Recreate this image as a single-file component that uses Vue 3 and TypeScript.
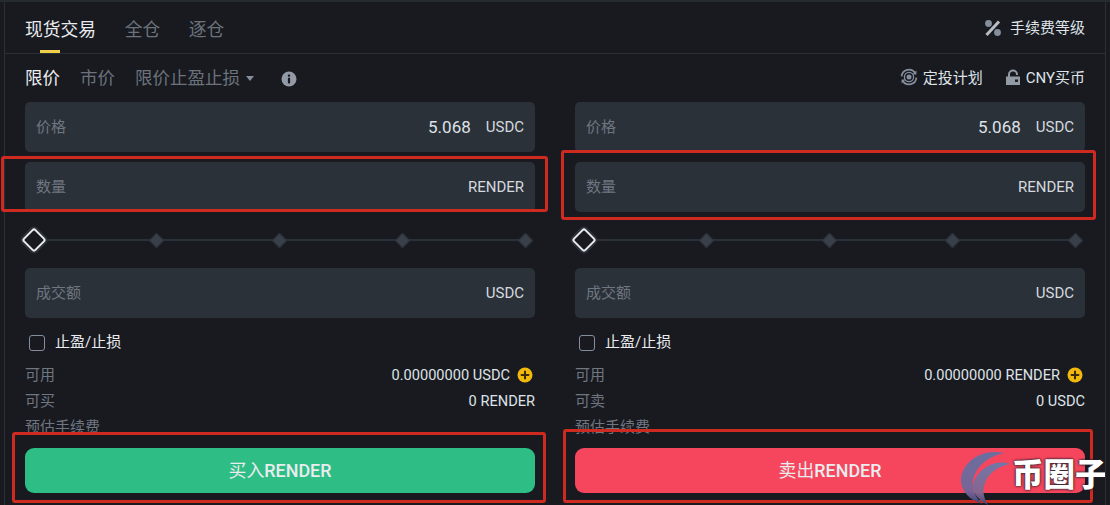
<script setup lang="ts">
interface TradeForm {
  key: string;
  available: string;
  maxLabel: string;
  maxValue: string;
  action: string;
}

const forms: TradeForm[] = [
  { key: "buy", available: "0.00000000 USDC", maxLabel: "可买", maxValue: "0 RENDER", action: "买入" },
  { key: "sell", available: "0.00000000 RENDER", maxLabel: "可卖", maxValue: "0 USDC", action: "卖出" },
];

const ticks = [1, 2, 3, 4];
</script>

<template>
  <div class="panel">
    <header class="tabs">
      <div class="tab-list">
        <span class="tab tab--active">现货交易</span>
        <span class="tab">全仓</span>
        <span class="tab">逐仓</span>
      </div>
      <div class="link link--fee">
        <svg class="percent" width="18" height="18" viewBox="0 0 18 18">
          <circle cx="4.500" cy="4.500" r="3.400" fill="#848e9c" />
          <circle cx="13.500" cy="13.500" r="3.400" fill="#848e9c" />
          <path d="M2.500 16 15 2.500" stroke="#b7bdc6" stroke-width="3" />
        </svg>
        <span>手续费等级</span>
      </div>
    </header>

    <div class="types">
      <span class="type type--active">限价</span>
      <span class="type">市价</span>
      <span class="type">限价止盈止损</span>
      <span class="caret"></span>
      <svg class="info" width="16" height="16" viewBox="0 0 16 16">
        <circle cx="8" cy="8" r="7.500" fill="#929aa5" />
        <rect x="6.900" y="6.800" width="2.200" height="5.600" fill="#181a20" />
        <rect x="6.900" y="3.600" width="2.200" height="2.100" fill="#181a20" />
      </svg>
      <div class="type-links">
        <div class="link link--small">
          <svg width="18" height="18" viewBox="0 0 18 18" fill="none">
            <circle cx="9" cy="9" r="2.500" fill="#848e9c" />
            <circle cx="9" cy="9" r="4.600" stroke="#848e9c" stroke-width="1.300" />
            <path d="M1.600 8.400A7.400 7.400 0 0 1 15.200 5M16.400 9.600A7.400 7.400 0 0 1 2.800 13" stroke="#848e9c" stroke-width="1.700" />
            <path d="M16.400 2.400v4h-4zM1.600 15.600v-4h4z" fill="#848e9c" />
          </svg>
          <span>定投计划</span>
        </div>
        <div class="link link--small">
          <svg width="16" height="18" viewBox="0 0 16 18" fill="none">
            <path d="M4 9V6.500a4 4 0 0 1 8 0V7" stroke="#929aa5" stroke-width="2" />
            <path d="M1 8.500h14V17H1z" fill="#929aa5" />
            <rect x="10" y="11.500" width="3" height="2.400" fill="#181a20" />
          </svg>
          <span>CNY买币</span>
        </div>
      </div>
    </div>

    <div class="forms">
      <section v-for="form in forms" :key="form.key" class="form">
        <div class="field">
          <span class="field-label">价格</span>
          <span class="field-value">5.068</span>
          <span class="field-unit">USDC</span>
        </div>
        <div class="field field--qty">
          <span class="field-label">数量</span>
          <span class="field-unit">RENDER</span>
        </div>

        <div class="slider">
          <span class="thumb"></span>
          <span v-for="tick in ticks" :key="tick" class="tick"></span>
        </div>

        <div class="field">
          <span class="field-label">成交额</span>
          <span class="field-unit">USDC</span>
        </div>

        <label class="check">
          <span class="box"></span>
          <span class="check-text">止盈/止损</span>
        </label>

        <div class="info-rows">
          <div class="row">
            <span class="row-label">可用</span>
            <span class="row-value">
              {{ form.available }}
              <svg class="plus" width="16" height="16" viewBox="0 0 16 16">
                <circle cx="8" cy="8" r="7.500" fill="#f0b90b" />
                <path d="M8 3.800v8.400M3.800 8h8.400" stroke="#3a2c08" stroke-width="2" />
              </svg>
            </span>
          </div>
          <div class="row">
            <span class="row-label">{{ form.maxLabel }}</span>
            <span class="row-value">{{ form.maxValue }}</span>
          </div>
          <div class="row">
            <span class="row-label">预估手续费</span>
          </div>
        </div>

        <button :class="['action', `action--${form.key}`]">{{ form.action }}<b>RENDER</b></button>
      </section>
    </div>

    <i class="mark mark--qty-buy"></i>
    <i class="mark mark--qty-sell"></i>
    <i class="mark mark--btn-buy"></i>
    <i class="mark mark--btn-sell"></i>

    <div class="watermark">
      <svg width="58" height="56" viewBox="0 0 58 56">
        <defs>
          <linearGradient id="wm-outer" x1="0" y1="0" x2="0" y2="1">
            <stop offset="0" stop-color="#6a6f9f" />
            <stop offset="0.750" stop-color="#7a6496" />
            <stop offset="1" stop-color="#3c4778" />
          </linearGradient>
          <linearGradient id="wm-inner" x1="0" y1="0" x2="0" y2="1">
            <stop offset="0" stop-color="#7276a8" />
            <stop offset="0.700" stop-color="#86668f" />
            <stop offset="1" stop-color="#3c4778" />
          </linearGradient>
        </defs>
        <path d="M46 3C22-2 2 14 3 32c1 10 9 18 21 22-9-10-12-20-7-30C22 13 33 6 46 3Z" fill="url(#wm-outer)" />
        <path d="M53 14C36 8 18 20 15 35c-1 7 5 15 15 20-6-9-6-19 0-28 5-7 14-12 23-13Z" fill="url(#wm-inner)" />
      </svg>
      <span>币圈子</span>
    </div>
  </div>
</template>

<style>
html,
body {
  margin: 0;
  background: #181a20;
}
</style>

<style scoped>
.panel {
  position: relative;
  box-sizing: border-box;
  width: 1110px;
  height: 505px;
  overflow: hidden;
  background: #181a20;
  color: #eaecef;
  font-family: Roboto, "Noto Sans CJK SC", sans-serif;
  border-top: 2px solid #262a31;
}

.panel::before,
.panel::after {
  content: "";
  position: absolute;
  top: 0;
  bottom: 0;
  width: 1px;
  background: #2b2f36;
}

.panel::before {
  left: 4px;
}

.panel::after {
  right: 4px;
}

.tabs {
  display: flex;
  align-items: center;
  justify-content: space-between;
  height: 51px;
  margin: 0 4px;
  padding: 0 21px;
  border-bottom: 1px solid #2b2f36;
}

.tab-list {
  display: flex;
  gap: 28.500px;
  height: 100%;
}

.tab {
  position: relative;
  display: flex;
  align-items: center;
  font-size: 17.800px;
  color: #6b727c;
}

.tab--active {
  color: #eaecef;
}

.tab--active::after {
  content: "";
  position: absolute;
  left: 15px;
  bottom: 0;
  width: 20px;
  height: 3px;
  background: #f0d04a;
}

.link {
  display: flex;
  align-items: center;
  gap: 8px;
  font-size: 15px;
  color: #dfe2e7;
}

.link--fee {
  margin-bottom: 2px;
}

.percent {
  margin-top: 2px;
}

.link--small {
  gap: 5px;
}

.types {
  display: flex;
  align-items: center;
  box-sizing: border-box;
  height: 48px;
  padding: 0 25px 3px;
}

.type {
  margin-right: 20px;
  font-size: 17.500px;
  color: #6b727c;
}

.type:nth-child(3) {
  margin-right: 6px;
}

.type--active {
  color: #eaecef;
}

.caret {
  width: 0;
  height: 0;
  margin-top: 3px;
  border: 4px solid transparent;
  border-bottom: 0;
  border-top: 5px solid #848e9c;
}

.info {
  margin-left: 27px;
  margin-top: 5px;
}

.type-links {
  display: flex;
  align-items: center;
  gap: 22px;
  margin-left: auto;
}

.forms {
  display: flex;
  gap: 40px;
  padding: 0 25px;
}

.form {
  display: flex;
  flex-direction: column;
  flex: 1;
  min-width: 0;
}

.field {
  display: flex;
  align-items: center;
  box-sizing: border-box;
  height: 50px;
  padding: 0 11px;
  background: #2b3139;
  border-radius: 5px;
}

.field--qty {
  margin-top: 10px;
}

.field-label {
  margin-right: auto;
  margin-bottom: 4px;
  font-size: 15px;
  color: #6f7680;
}

.field-value {
  margin-right: 15px;
  font-size: 17px;
  color: #dfe2e7;
}

.field-unit {
  font-size: 15px;
  color: #d5d9df;
}

/* items take no room here, so their centres spread evenly from 34px to 526px */
.slider {
  position: relative;
  display: flex;
  align-items: center;
  justify-content: space-between;
  height: 56px;
  padding: 0 9px;
}

.slider::before {
  content: "";
  position: absolute;
  left: 10px;
  right: 9px;
  top: 50%;
  height: 2px;
  margin-top: -1px;
  background: #2b3139;
}

.thumb,
.tick {
  position: relative;
  transform: rotate(45deg);
}

.thumb {
  box-sizing: border-box;
  width: 18px;
  height: 18px;
  margin: 0 -9px;
  background: #181a20;
  border: 2px solid #eaecef;
  border-radius: 3px;
  box-shadow: 0 0 0 2px #2b3139;
}

.tick {
  width: 9px;
  height: 9px;
  margin: 0 -4.500px;
  background: #3a4049;
  border: 1px solid #2b3139;
}

.check {
  display: flex;
  align-items: center;
  gap: 10px;
  height: 47px;
  margin-left: 4px;
  font-size: 15px;
  color: #eaecef;
}

.check-text {
  margin-bottom: 2px;
}

.box {
  box-sizing: border-box;
  width: 16px;
  height: 16px;
  margin-top: 2px;
  border: 1px solid #848e9c;
  border-radius: 3px;
}

.info-rows {
  height: 86px;
  margin-top: -3px;
}

.row {
  display: flex;
  align-items: center;
  justify-content: space-between;
  height: 26px;
  font-size: 15px;
}

.row-label {
  margin-bottom: 4px;
  color: #6f7680;
}

.row-value {
  display: flex;
  align-items: center;
  gap: 5px;
  font-size: 14.600px;
  color: #dfe2e7;
}

.plus {
  width: 16px;
  height: 16px;
  margin: 0 2px;
}

.action {
  height: 45px;
  padding: 0 0 4px;
  border: 0;
  border-radius: 9px;
  font-family: inherit;
  font-size: 17.900px;
  color: #eaecef;
}

.action b {
  font-weight: 500;
}

.action--buy {
  background: #2ebd85;
}

.action--sell {
  background: #f6465d;
}

.mark {
  position: absolute;
  box-sizing: border-box;
  border: 3px solid #cf2a20;
  border-radius: 3px;
}

.mark--qty-buy {
  left: 1px;
  top: 154px;
  width: 547px;
  height: 56px;
}

.mark--qty-sell {
  left: 561px;
  top: 148px;
  width: 535px;
  height: 70px;
}

.mark--btn-buy {
  left: 12px;
  top: 430px;
  width: 534px;
  height: 71px;
}

.mark--btn-sell {
  left: 563px;
  top: 427px;
  width: 530px;
  height: 74px;
}

.watermark {
  position: absolute;
  left: 958px;
  top: 448px;
  display: flex;
  align-items: center;
}

.watermark span {
  margin-left: -4px;
  margin-bottom: 10px;
  font-family: "Noto Sans CJK SC", sans-serif;
  font-size: 31.500px;
  font-weight: 900;
  line-height: 1;
  color: #fff;
  text-shadow: 0 0 3px #23202a, 0 0 2px #23202a;
}
</style>
